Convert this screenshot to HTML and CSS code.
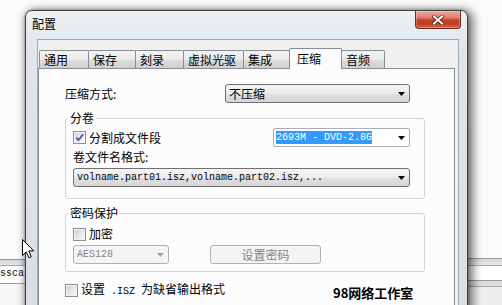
FILE: index.html
```html
<!DOCTYPE html>
<html lang="zh-CN">
<head>
<meta charset="utf-8">
<title>配置</title>
<link rel="stylesheet" href="styles.css">
</head>
<body>
<div class="desk">
  <div class="bgwin bgl">
    <div class="bgbar"></div>
    <div class="bgtxt">sscai</div>
  </div>
  <div class="bgwin bgr">
    <div class="bgbar"></div>
    <div class="bgwhite"></div>
    <div class="bgbar2"></div>
  </div>

  <div class="window">
    <div class="titlebar">
      <span class="title">配置</span>
      <div class="close">
        <svg width="12" height="10" viewBox="0 0 12 10"><path d="M2 1.5 L10 8.5 M10 1.5 L2 8.5" stroke="#5b2217" stroke-width="3.6" stroke-linecap="square"/><path d="M2 1.5 L10 8.5 M10 1.5 L2 8.5" stroke="#ffffff" stroke-width="2" stroke-linecap="square"/></svg>
      </div>
    </div>
    <div class="client">
      <div class="tabs">
        <div class="tab w1">通用</div>
        <div class="tab w2">保存</div>
        <div class="tab w3">刻录</div>
        <div class="tab w4">虚拟光驱</div>
        <div class="tab w5">集成</div>
        <div class="tab w6 on">压缩</div>
        <div class="tab w7">音频</div>
      </div>
      <div class="page">
        <div class="row1">
          <span>压缩方式:</span>
          <div class="combo c1"><span>不压缩</span><svg class="arr" width="7" height="4" viewBox="0 0 7 4"><path d="M0 0H7L3.5 4Z" fill="#000"/></svg></div>
        </div>
        <fieldset class="grp g1">
          <legend>分卷</legend>
          <div class="row2">
            <div class="chk"><span class="box"><svg width="11" height="11" viewBox="0 0 11 11"><path d="M2.2 5.6 L4.5 8.2 L9 2.4" fill="none" stroke="#4a5c9c" stroke-width="1.8"/></svg></span><span>分割成文件段</span></div>
            <div class="combo edit c2"><span class="sel">2693M - DVD-2.8G</span><svg class="arr" width="7" height="4" viewBox="0 0 7 4"><path d="M0 0H7L3.5 4Z" fill="#000"/></svg></div>
          </div>
          <div class="lbl">卷文件名格式:</div>
          <div class="combo c3"><span class="mono">volname.part01.isz,volname.part02.isz,...</span><svg class="arr" width="7" height="4" viewBox="0 0 7 4"><path d="M0 0H7L3.5 4Z" fill="#000"/></svg></div>
        </fieldset>
        <fieldset class="grp g2">
          <legend>密码保护</legend>
          <div class="chk"><span class="box"></span><span>加密</span></div>
          <div class="row4">
            <div class="combo dis c4"><span class="mono">AES128</span><svg class="arr" width="7" height="4" viewBox="0 0 7 4"><path d="M0 0H7L3.5 4Z" fill="#a3a3a3"/></svg></div>
            <div class="btn dis">设置密码</div>
          </div>
        </fieldset>
        <div class="chk last"><span class="box"></span><span>设置<span class="mono"> .ISZ </span>为缺省输出格式</span></div>
      </div>
    </div>
  </div>

  <div class="wm">98网络工作室</div>

  <svg class="cursor" width="13" height="20" viewBox="0 0 13 20"><path d="M0.5 0.5 V16.5 L4.3 12.8 L6.9 18.8 L9.3 17.8 L6.8 11.9 H11.8 Z" fill="#fff" stroke="#000" stroke-width="1" stroke-linejoin="miter"/></svg>
</div>
</body>
</html>
```
FILE: styles.css
```css
* { box-sizing: border-box; margin: 0; padding: 0; }
html, body { width: 502px; height: 305px; overflow: hidden; }
body {
  background: #fbfbfb;
  font: 12px/14px "Noto Sans CJK SC", "Noto Sans", sans-serif;
  color: #000;
}
.desk { position: relative; width: 502px; height: 305px; overflow: hidden; background: #fbfbfb; }

/* background windows */
.bgwin { position: absolute; }
.bgl { left: 0; top: 259px; width: 30px; height: 46px; background: #f6f6f6; }
.bgl .bgbar { height: 7px; border-top: 1px solid #9a9a9a; border-bottom: 1px solid #a8a8a8; background: linear-gradient(#d6d6d6, #e6e6e6); }
.bgl .bgtxt { height: 18px; background: #fff; border-bottom: 1px solid #a0a0a0; font: 10px/16px "Liberation Mono", monospace; color: #111; }
.bgr { left: 466px; top: 258px; width: 36px; height: 47px; background: #eeeeee; }
.bgr .bgbar { height: 8px; border-top: 1px solid #9a9a9a; border-bottom: 1px solid #a8a8a8; background: linear-gradient(#d6d6d6, #e6e6e6); }
.bgr .bgwhite { height: 14px; background: #fff; }
.bgr .bgbar2 { height: 7px; border-top: 1px solid #9a9a9a; border-bottom: 1px solid #a8a8a8; background: #dcdcdc; }

/* window */
.window {
  position: absolute; left: 25px; top: 10px; width: 443px; height: 320px;
  border: 1px solid #3e4247; border-radius: 7px 7px 0 0;
  background: linear-gradient(#eef2f6, #dfe5eb 40px, #d8dee4);
  box-shadow: 3px 2px 10px 2px rgba(0,0,0,.55), 0 0 3px rgba(0,0,0,.35);
  display: flex; flex-direction: column;
}
.titlebar { height: 28px; position: relative; padding-left: 6px; line-height: 26px; flex: none; }
.close {
  position: absolute; left: 389px; top: 0; width: 46px; height: 18px;
  border: 1px solid #6e2a1f; border-top: none; border-radius: 0 0 4px 4px;
  background: linear-gradient(#e9ab9c 0%, #dc7f6b 40%, #c7432c 52%, #c23c24 75%, #d9674c 100%);
  box-shadow: inset 0 0 0 1px rgba(255,255,255,.25);
  display: flex; align-items: center; justify-content: center;
}

.client {
  margin: 0 8px 0 11px; flex: 1;
  background: #f0f0f0;
  border: 1px solid #a3abb4; border-bottom: none;
  padding-top: 8px;
}
.tabs { display: flex; align-items: flex-end; height: 20px; padding-left: 1px; position: relative; z-index: 1; }
.tab {
  height: 18px; border: 1px solid #898c95; border-bottom: none; border-radius: 2px 2px 0 0;
  background: linear-gradient(#f3f3f3, #ebebeb 50%, #dddddd 51%, #cfcfcf);
  padding-left: 4px; line-height: 17px; white-space: nowrap; flex: none;
}
.tab + .tab { margin-left: -1px; }
.tab.on { height: 21px; margin-bottom: -1px; background: #fcfcfc; padding-left: 7px; line-height: 19px; position: relative; z-index: 2; }
.w1 { width: 50px; }
.w2 { width: 48px; }
.w3 { width: 49px; }
.w4 { width: 61px; }
.w5 { width: 47px; }
.w6 { width: 53px; }
.w7 { width: 44px; }

.page {
  margin-right: 3px; border: 1px solid #898c95; background: #fcfcfc;
  height: 260px; padding: 15px 0 0 26px;
}
.row1 { display: flex; align-items: center; justify-content: space-between; width: 345px; }

.combo {
  height: 19px; border: 1px solid #707070; border-radius: 3px;
  background: linear-gradient(#f4f4f4, #ececec 50%, #e0e0e0 51%, #d6d6d6);
  display: flex; align-items: center; justify-content: space-between;
  padding: 0 3px 0 3px; white-space: nowrap; overflow: hidden;
}
.arr { flex: none; margin-right: 1px; }
.c1 { width: 185px; }
.c1 > span { line-height: 15px; }
.mono { font-family: "Liberation Mono", "DejaVu Sans Mono", monospace; font-size: 10px; }

.grp { width: 360px; border: 1px solid #cfd4d8; border-radius: 3px; padding: 3px 14px 11px 7px; margin-top: 8px; }
.grp legend { margin-left: -5px; padding: 0 2px; line-height: 14px; }
.g2 { margin-top: 7px; padding-top: 7px; padding-bottom: 7px; }

.row2 { display: flex; justify-content: space-between; align-items: center; height: 19px; }
.chk { display: flex; align-items: center; gap: 3px; line-height: 14px; white-space: nowrap; }
.box {
  width: 13px; height: 13px; flex: none; border: 1px solid #8e8f8f;
  background: linear-gradient(135deg, #c9cdd3, #eef0f2 70%, #f8f8f8);
  box-shadow: inset 0 0 0 1px #f4f4f4;
  display: flex; align-items: center; justify-content: center;
}
.box svg { display: block; }

.edit { background: #fff; border-color: #a9b0b9; border-radius: 2px; padding-left: 2px; }
.c2 { width: 137px; }
.sel { background: #3399ff; color: #fff; font: 10px/13px "Liberation Mono", "DejaVu Sans Mono", monospace; white-space: pre; }

.lbl { margin-top: 3px; }
.c3 { width: 337px; margin-top: 4px; }

.row4 { display: flex; margin-top: 4px; }
.dis { border-color: #adb2b5; background: #f4f4f4; color: #838383; }
.c4 { width: 96px; }
.btn { width: 111px; height: 19px; margin-left: 41px; border: 1px solid #adb2b5; border-radius: 3px; display: flex; align-items: center; justify-content: center; }

.last { margin-top: 10px; }
.last .mono { white-space: pre; }

.wm { position: absolute; left: 333px; top: 286px; font: 700 13px/14px "Noto Sans CJK SC", sans-serif; color: #000; white-space: nowrap; }
.cursor { position: absolute; left: 22px; top: 239px; }
```
